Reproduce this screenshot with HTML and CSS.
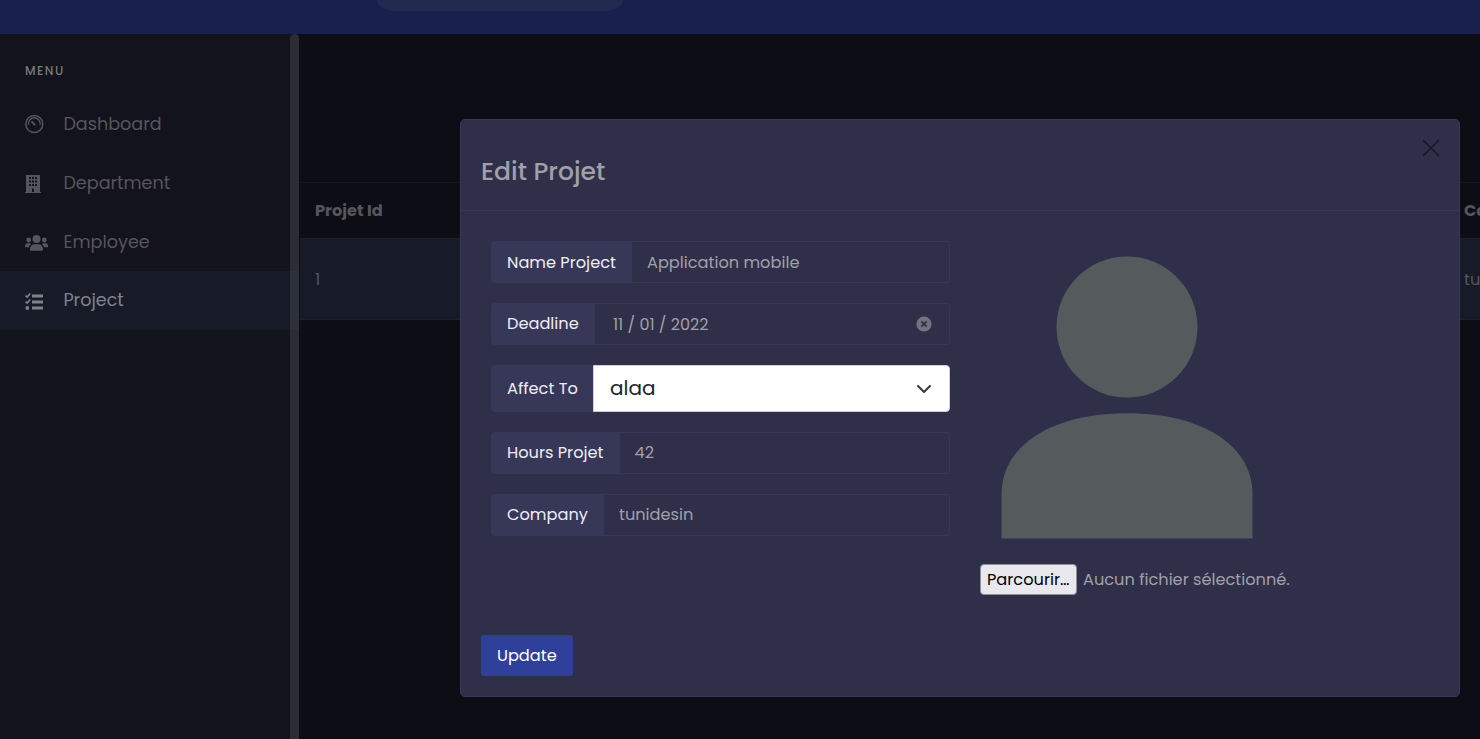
FILE: index.html
```html
<!DOCTYPE html>
<html lang="fr">
<head>
<meta charset="utf-8">
<title>Edit Projet</title>
<link rel="stylesheet" href="styles.css">
</head>
<body>
<div class="app">
  <header class="topbar"><div class="search"></div></header>
  <div class="main">
    <nav class="sidebar">
      <div class="menu-title">MENU</div>
      <a class="item">
        <svg class="icon" viewBox="0 0 24 20"><g fill="none" stroke="currentColor"><circle cx="9.300" cy="10" r="8.500" stroke-width="1.500"/><path d="M3.500 10.800a5.900 5.900 0 1 1 11.600 0" stroke-width="1.400"/><path d="M6.500 7.500l3.600 3.600" stroke-width="1.900"/></g></svg>
        <span>Dashboard</span>
      </a>
      <a class="item">
        <svg class="icon low" viewBox="0 0 24 20"><path fill="currentColor" fill-rule="evenodd" d="M1 1h14v17h1v1H0v-1h1zM4 3h2v2H4zM7 3h2v2H7zM10 3h2v2h-2zM4 6.500h2v2H4zM7 6.500h2v2H7zM10 6.500h2v2h-2zM4 10h2v2H4zM7 10h2v2H7zM10 10h2v2h-2zM7 14.500h2v3.500H7z"/></svg>
        <span>Department</span>
      </a>
      <a class="item">
        <svg class="icon low" viewBox="0 0 24 20"><g fill="currentColor"><circle cx="11.500" cy="6" r="4"/><circle cx="3.700" cy="7" r="2.400"/><circle cx="19.300" cy="7" r="2.400"/><path d="M5 16.200c0-3 1.800-5 4.300-5h4.400c2.500 0 4.300 2 4.300 5 0 .9-.6 1.600-1.500 1.600h-10c-.9 0-1.500-.7-1.500-1.600zM0 14.300v-1.200c0-1.700 1-2.900 2.500-2.900h2c.7 0 1.300.3 1.700.7-1.300.8-2 2-2.200 3.400zM23 14.300v-1.200c0-1.700-1-2.900-2.500-2.900h-2c-.7 0-1.300.3-1.700.7 1.300.8 2 2 2.200 3.400z"/></g></svg>
        <span>Employee</span>
      </a>
      <a class="item active">
        <svg class="icon low" viewBox="0 0 24 20"><g fill="none" stroke="currentColor"><path d="M.5 4.500l1.700 1.600 3-3.600M.5 10.500l1.700 1.600 3-3.600" stroke-width="1.700"/><path d="M7 5h11M7 11h11M7 17h11" stroke-width="2.800"/></g><circle cx="2.300" cy="17" r="1.900" fill="currentColor"/></svg>
        <span>Project</span>
      </a>
      <div class="scrollbar"></div>
    </nav>
    <section class="content">
      <div class="row head"><span>Projet Id</span><span class="last">Company</span></div>
      <div class="row data"><span>1</span><span class="last">tunidesin</span></div>
    </section>
  </div>
  <div class="modal">
    <div class="modal-head">
      <h5>Edit Projet</h5>
      <svg class="close" viewBox="0 0 18 18"><path d="M1.500 1.500l15 15M16.500 1.500l-15 15" stroke="currentColor" stroke-width="1.700" stroke-linecap="round"/></svg>
    </div>
    <div class="modal-body">
      <div class="fields">
        <div class="group lowered"><label class="w-name">Name Project</label><div class="control"><span>Application mobile</span></div></div>
        <div class="group"><label class="w-deadline">Deadline</label><div class="control date"><span>11 / 01 / 2022</span><svg class="clear" viewBox="0 0 16 16"><circle cx="8" cy="8" r="7.600" fill="#73727f"/><path d="M5.300 5.300l5.400 5.400M10.700 5.300l-5.400 5.400" stroke="#2f2f49" stroke-width="1.800"/></svg></div></div>
        <div class="group tall"><label class="w-affect">Affect To</label><div class="control select"><span>alaa</span><svg class="chevron" viewBox="0 0 16 16"><path d="M2 5l6 6 6-6" fill="none" stroke="#343a40" stroke-width="2" stroke-linecap="round" stroke-linejoin="round"/></svg></div></div>
        <div class="group"><label class="w-hours">Hours Projet</label><div class="control hours"><span>42</span></div></div>
        <div class="group"><label class="w-company">Company</label><div class="control"><span>tunidesin</span></div></div>
      </div>
      <div class="photo">
        <svg class="avatar" viewBox="0 0 252 283"><g fill="#555a5d"><circle cx="126" cy="71" r="70.500"/><path d="M.5 282.500V238C.5 190 50 157.300 126 157.300S251.500 190 251.500 238v44.500z"/></g></svg>
        <div class="file"><button>Parcourir…</button><span>Aucun fichier sélectionné.</span></div>
      </div>
    </div>
    <button class="update">Update</button>
  </div>
</div>
</body>
</html>
```
FILE: styles.css
```css
* { box-sizing: border-box; }
body { margin: 0; font: 16.200px/24px Poppins, Inter, sans-serif; color: #a0a0a9; background: #0c0d15; }
.app { position: relative; width: 1480px; height: 739px; overflow: hidden; display: flex; flex-direction: column; }
.topbar { height: 34px; background: #19204e; padding-left: 377px; flex: none; }
.search { width: 246px; height: 11px; background: #222a50; border-radius: 0 0 19px 19px / 0 0 11px 11px; }
.main { flex: 1; display: flex; }
.sidebar { position: relative; width: 299px; flex: none; background: #12131c; }
.menu-title { height: 61px; padding: 25px 25px 0; font-size: 12px; letter-spacing: 1.500px; font-weight: 500; color: #777b7a; }
.item { display: flex; align-items: center; gap: 14.400px; height: 58.700px; padding-left: 25px; font-size: 17.600px; color: #55565b; }
.item.active { color: #818287; background: #171a27; }
.icon { width: 24px; height: 20px; flex: none; }
.icon.low { margin-top: 2px; }
.scrollbar { position: absolute; right: 0; top: 0; width: 9px; height: 100%; background: rgba(70, 72, 75, .5); border-radius: 5px 5px 0 0; }
.content { flex: 1; padding-top: 148px; margin-left: 1px; }
.row { display: flex; align-items: center; justify-content: space-between; padding-left: 15px; color: #55565b; overflow: hidden; }
.head { height: 57px; border-top: 1px solid #14161d; border-bottom: 1px solid #1c202c; font-weight: 700; }
.data { height: 81px; padding-top: 2px; background: #171a27; border-bottom: 1px solid #1c202c; }
.last { width: 16px; overflow: hidden; white-space: nowrap; flex: none; }
.modal { position: absolute; left: 460px; top: 119px; width: 1000px; height: 578px; background: #2f2f49; border: 1px solid #373858; border-radius: 5px; }
.modal-head { display: flex; justify-content: space-between; height: 91px; padding: 19px 19px 0 20px; border-bottom: 1px solid #373858; }
h5 { margin: 14px 0 0; font-size: 25px; line-height: 37px; font-weight: 500; }
.close { width: 18px; height: 18px; color: #181924; }
.modal-body { display: flex; padding: 30px 0 0 30px; }
.fields { width: 459px; display: grid; gap: 20px; align-content: start; }
.group { display: flex; height: 42px; }
.tall { height: 47px; }
label { background: #373858; color: #edeef4; display: flex; align-items: center; padding-left: 16px; border-radius: 4px 0 0 4px; flex: none; }
.control { flex: 1; display: flex; align-items: center; padding-left: 15px; border: 1px solid #373858; border-left: 0; border-radius: 0 4px 4px 0; }
.lowered label, .lowered .control { padding-top: 1px; }
.date { padding: 0 17px 0 18px; justify-content: space-between; font-size: 16px; }
.date span { padding-top: 2px; }
.hours { padding-left: 14.500px; }
.clear { width: 16px; height: 16px; }
.select { background: #fff; color: #212529; font-size: 20px; border: 1px solid #ced0e0; padding: 0 17px 0 16px; justify-content: space-between; }
.select span { padding-bottom: 1px; }
.chevron { width: 16px; height: 16px; }
.photo { padding: 15px 0 0 30px; }
.avatar { display: block; width: 252px; height: 283px; margin-left: 20.500px; }
.file { display: flex; align-items: center; gap: 6px; margin-top: 25px; }
button { font: inherit; border: 0; padding: 0; text-align: left; }
.file button { width: 97px; height: 31px; background: #e9e9ed; color: #000; border: 1px solid #8f8f9d; border-radius: 4px; padding-left: 6px; }
.update { display: block; width: 92px; height: 41px; margin: 40px 0 0 20px; padding-left: 16px; color: #fff; background: #2f409a; border-radius: 3px; }
span { white-space: nowrap; }
.w-name { width: 141px; }
.w-deadline { width: 104px; }
.w-affect { width: 102px; }
.w-hours { width: 129px; }
.w-company { width: 113px; }
```
